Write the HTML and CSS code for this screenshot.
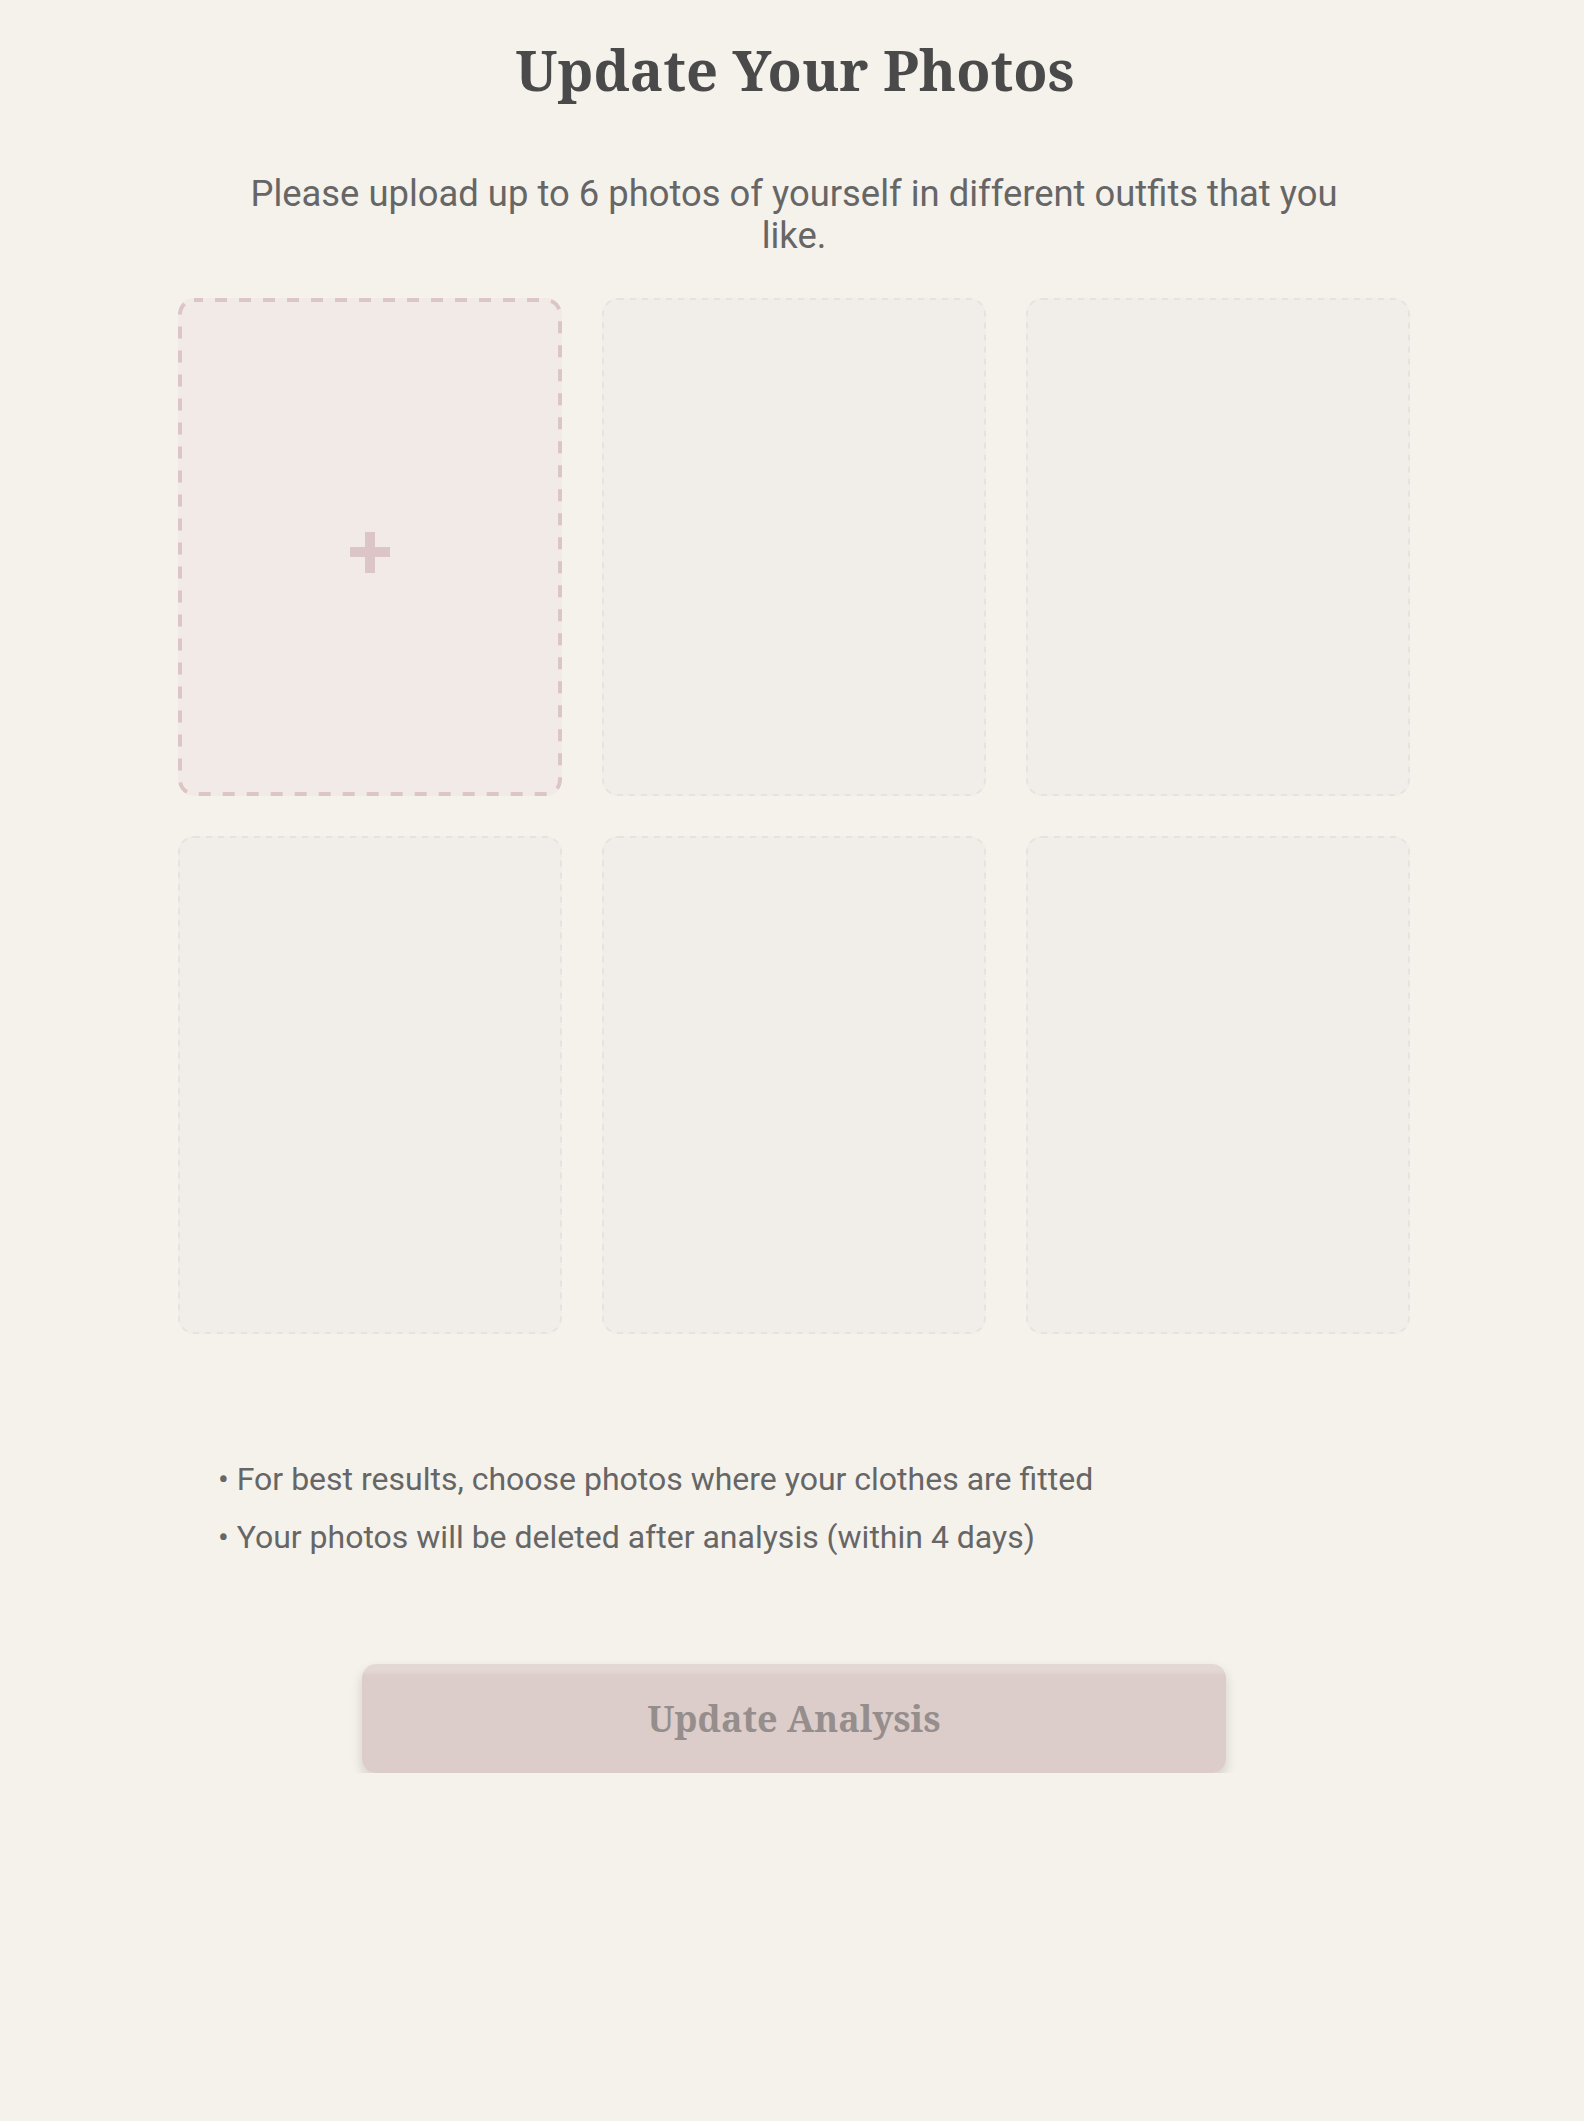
FILE: index.html
```html
<!DOCTYPE html>
<html lang="en">
<head>
<meta charset="utf-8">
<title>Update Your Photos</title>
<link rel="stylesheet" href="styles.css">
</head>
<body>
<main class="page">
  <h1 class="title">Update Your Photos</h1>
  <p class="subtitle">Please upload up to 6 photos of yourself in different outfits that you like.</p>
  <div class="grid">
    <div class="slot slot-active">
      <svg class="plus" width="40" height="41" viewBox="0 0 40 41" aria-hidden="true">
        <rect x="15" y="0" width="10" height="41" fill="#dcc5c6"/>
        <rect x="0" y="15" width="40" height="10" fill="#dcc5c6"/>
      </svg>
    </div>
    <div class="slot"></div>
    <div class="slot"></div>
    <div class="slot"></div>
    <div class="slot"></div>
    <div class="slot"></div>
  </div>
  <ul class="notes">
    <li>• For best results, choose photos where your clothes are fitted</li>
    <li>• Your photos will be deleted after analysis (within 4 days)</li>
  </ul>
  <button class="submit" type="button" disabled>Update Analysis</button>
</main>
</body>
</html>
```

FILE: styles.css
```css
html, body {
  margin: 0;
  padding: 0;
  background: #f5f2ec;
}

body {
  font-family: Roboto, "Liberation Sans", sans-serif;
  color: #666666;
  padding-left: 4px;
}

.page {
  width: 1232px;
  margin: 0 auto;
  padding-top: 31px;
  display: flex;
  flex-direction: column;
  align-items: stretch;
}

.title {
  margin: 0;
  padding-left: 2px;
  font-family: "Noto Serif", "DejaVu Serif", serif;
  font-weight: 700;
  font-size: 56px;
  line-height: 76px;
  color: #4a4a4a;
  text-align: center;
}

.subtitle {
  margin: 66px auto 0;
  max-width: 1120px;
  font-size: 36.4px;
  line-height: 42px;
  text-align: center;
  color: #666666;
}

.grid {
  margin-top: 41px;
  display: grid;
  grid-template-columns: repeat(3, 384px);
  grid-auto-rows: 498px;
  column-gap: 40px;
  row-gap: 40px;
}

.slot {
  border-radius: 16px;
  background-color: #f1eeea;
  background-image: url("data:image/svg+xml,%3Csvg xmlns='http://www.w3.org/2000/svg' width='384' height='498'%3E%3Crect x='1' y='1' width='382' height='496' rx='15' ry='15' fill='none' stroke='%23e4e3e0' stroke-width='2' stroke-dasharray='6 6'/%3E%3C/svg%3E");
  background-repeat: no-repeat;
  background-size: 100% 100%;
}

.slot-active {
  background-color: #f2eae6;
  background-image: url("data:image/svg+xml,%3Csvg xmlns='http://www.w3.org/2000/svg' width='384' height='498'%3E%3Crect x='2' y='2' width='380' height='494' rx='14' ry='14' fill='none' stroke='%23dcc5c6' stroke-width='4' stroke-dasharray='12 12' stroke-dashoffset='3'/%3E%3C/svg%3E");
  display: flex;
  align-items: center;
  justify-content: center;
}

.plus {
  display: block;
  margin-top: 10px;
  margin-left: -1px;
}

.notes {
  list-style: none;
  margin: 117px 0 0;
  padding: 0 0 0 40px;
  font-size: 32px;
  line-height: 57.6px;
  color: #666666;
}

.notes li {
  margin: 0;
}

.submit {
  display: flex;
  align-items: center;
  justify-content: center;
  box-sizing: border-box;
  width: 864px;
  height: 109px;
  margin: 98px auto 0;
  padding: 0;
  border: none;
  border-radius: 14px;
  background: linear-gradient(to bottom, #e4d8d5 0, #e4d8d5 6px, #dccdca 12px, #dccdca 100%);
  box-shadow: 0 6px 12px rgba(0, 0, 0, 0.15);
  font-family: "Noto Serif", "DejaVu Serif", serif;
  font-weight: 700;
  font-size: 36px;
  color: #958e8c;
  cursor: not-allowed;
}
```
